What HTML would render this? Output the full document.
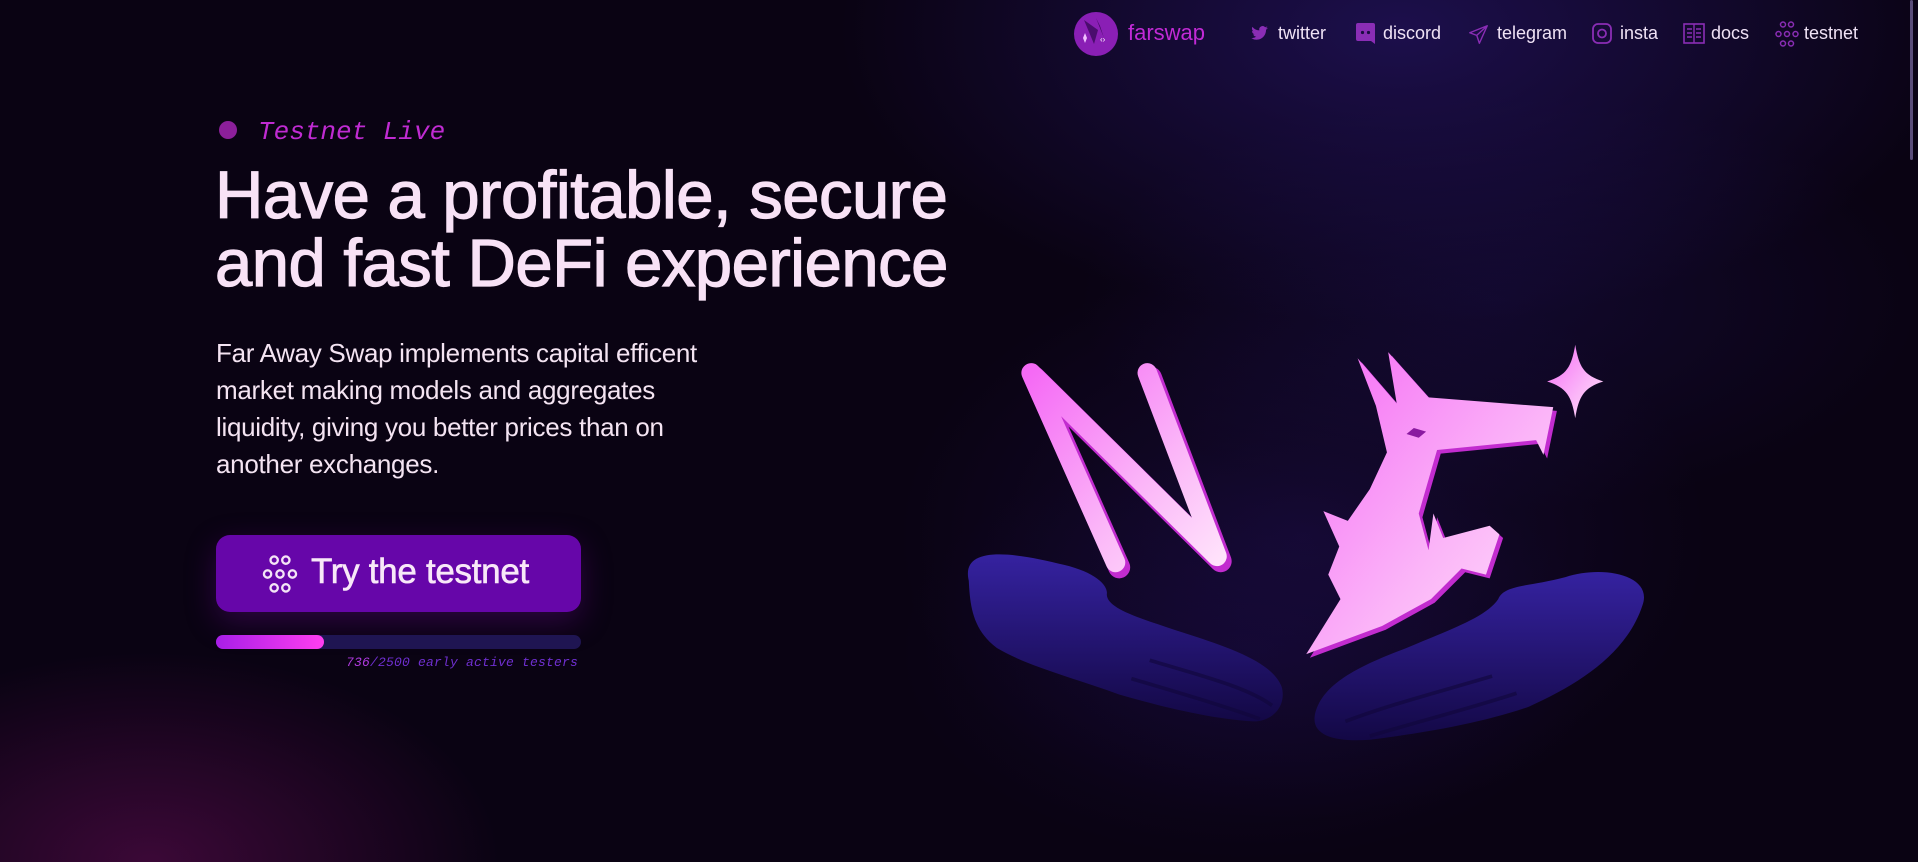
<!DOCTYPE html>
<html><head><meta charset="utf-8"><style>
*{margin:0;padding:0;box-sizing:border-box}
html,body{width:1918px;height:862px;overflow:hidden}
body{position:relative;font-family:"Liberation Sans",sans-serif;color:#f6e6f6;
background:
radial-gradient(ellipse 800px 420px at 1400px 30px, rgba(36,20,100,0.7), rgba(30,15,80,0) 70%),
radial-gradient(ellipse 600px 300px at 1500px 300px, rgba(25,14,70,0.5), rgba(20,10,60,0) 70%),
radial-gradient(ellipse 500px 300px at 150px 862px, rgba(80,10,70,0.7), rgba(60,8,55,0) 70%),
radial-gradient(ellipse 500px 300px at 1250px 650px, rgba(25,10,70,0.4), rgba(25,10,70,0) 70%),
#0a0313;}
.abs{position:absolute}
.nav a{position:absolute;top:23px;font-size:18px;color:#efe2f5;text-decoration:none;white-space:nowrap}
.ic{position:absolute;top:24px}
.mono{font-family:"Liberation Mono",monospace;font-style:italic}
</style></head><body>
<div class="abs" style="left:1910px;top:0;width:3px;height:160px;background:#5a4d7a;border-radius:2px"></div>

<svg class="abs" style="left:1074px;top:12px" width="44" height="44" viewBox="0 0 44 44">
<circle cx="22" cy="22" r="22" fill="#8a1fb5"/>
<path d="M10 8 L20 32 L24 18 Z" fill="#4a0d6e"/><path d="M22 6 L30 26 L26 14Z" fill="#3d0a5c"/>
<path d="M9 26 l2 -5 l2 5 l-2 5z" fill="#f0c0ff"/>
<text x="26" y="30" font-size="8" fill="#fff" font-family="Liberation Sans">‹›</text>
</svg>
<div class="nav">
<a style="left:1128px;top:20px;font-size:22px;color:#c22ad6">farswap</a>
<svg class="ic" style="left:1250px" width="19" height="18" viewBox="0 0 24 24"><path fill="#8a2db5" d="M23 5c-.8.4-1.7.6-2.6.7.9-.6 1.6-1.4 2-2.5-.9.5-1.9.9-2.9 1.1A4.5 4.5 0 0 0 11.8 8.5 12.8 12.8 0 0 1 2.5 3.8a4.5 4.5 0 0 0 1.4 6c-.7 0-1.4-.2-2-.6 0 2.2 1.6 4 3.6 4.5-.7.2-1.4.2-2 .1.6 1.8 2.2 3.1 4.200 3.1A9 9 0 0 1 1 18.8 12.8 12.8 0 0 0 7.9 21c8.3 0 12.8-6.9 12.8-12.8v-.6c.9-.6 1.6-1.4 2.3-2.3z"/></svg>
<a style="left:1278px">twitter</a>
<svg class="ic" style="left:1356px;top:23px" width="19" height="21" viewBox="0 0 19 21"><path fill="#8a2db5" d="M2 0h15a2 2 0 0 1 2 2v19l-4-3H2a2 2 0 0 1-2-2V2a2 2 0 0 1 2-2z"/><circle cx="6.5" cy="9.5" r="1.6" fill="#1a0c40"/><circle cx="12.5" cy="9.5" r="1.6" fill="#1a0c40"/></svg>
<a style="left:1383px">discord</a>
<svg class="ic" style="left:1468px" width="21" height="21" viewBox="0 0 24 24"><path fill="none" stroke="#8a2db5" stroke-width="1.6" stroke-linejoin="round" d="M22 2 2 10l8 3 3 9z M22 2 10 13"/></svg>
<a style="left:1497px">telegram</a>
<svg class="ic" style="left:1592px;top:23px" width="20" height="21" viewBox="0 0 20 21"><rect x="1" y="1" width="18" height="19" rx="5" fill="none" stroke="#8a2db5" stroke-width="1.8"/><circle cx="10" cy="10.5" r="4" fill="none" stroke="#8a2db5" stroke-width="1.8"/></svg>
<a style="left:1620px">insta</a>
<svg class="ic" style="left:1683px;top:23px" width="22" height="21" viewBox="0 0 22 21"><rect x="1" y="1" width="20" height="19" fill="none" stroke="#8a2db5" stroke-width="1.6"/><path d="M11 1v19M4 6h5M4 10h5M4 14h5M13 6h5M13 10h5M13 14h5" stroke="#8a2db5" stroke-width="1.4"/></svg>
<a style="left:1711px">docs</a>
<svg class="ic" style="left:1775px;top:21px" width="24" height="26" viewBox="0 0 24 26" fill="none" stroke="#8a2db5" stroke-width="1.5"><circle cx="8" cy="3.5" r="2.5"/><circle cx="16" cy="3.5" r="2.5"/><circle cx="3.5" cy="13" r="2.5"/><circle cx="12" cy="13" r="2.5"/><circle cx="20.5" cy="13" r="2.5"/><circle cx="8" cy="22.5" r="2.5"/><circle cx="16" cy="22.5" r="2.5"/></svg>
<a style="left:1804px">testnet</a>
</div>

<div class="abs" style="left:219px;top:121px;width:18px;height:18px;border-radius:50%;background:#8c1f9a"></div>
<div class="abs mono" style="left:258px;top:117px;font-size:26px;color:#c02bd2">Testnet Live</div>
<h1 class="abs" style="left:215px;top:162px;font-size:67px;line-height:68px;font-weight:normal;-webkit-text-stroke:1.2px #f8e2f6;color:#f8e2f6;letter-spacing:-0.5px;white-space:nowrap">Have a profitable, secure<br>and fast DeFi experience</h1>
<p class="abs" style="left:216px;top:335px;font-size:26px;line-height:37px;color:#f4e4f2;letter-spacing:-0.3px;white-space:nowrap">Far Away Swap implements capital efficent<br>market making models and aggregates<br>liquidity, giving you better prices than on<br>another exchanges.</p>

<div class="abs" style="left:216px;top:535px;width:365px;height:77px;border-radius:14px;background:#6606a9;box-shadow:0 10px 30px rgba(110,10,150,0.35)"></div>
<svg class="abs" style="left:262px;top:555px" width="36" height="38" viewBox="0 0 24 26" fill="none" stroke="#f4e4f6" stroke-width="1.6"><circle cx="8" cy="3.5" r="2.5"/><circle cx="16" cy="3.5" r="2.5"/><circle cx="3.5" cy="13" r="2.5"/><circle cx="12" cy="13" r="2.5"/><circle cx="20.5" cy="13" r="2.5"/><circle cx="8" cy="22.5" r="2.5"/><circle cx="16" cy="22.5" r="2.5"/></svg>
<div class="abs" style="left:311px;top:552px;font-size:35px;color:#f8e8f8;-webkit-text-stroke:0.6px #f8e8f8;letter-spacing:-0.3px">Try the testnet</div>

<div class="abs" style="left:216px;top:635px;width:365px;height:14px;border-radius:7px;background:#1f1552"></div>
<div class="abs" style="left:216px;top:635px;width:108px;height:14px;border-radius:7px;background:linear-gradient(90deg,#a81ee8,#ff3ef0)"></div>
<div class="abs mono" style="left:346px;top:655px;font-size:13px;color:#6f2fd0;letter-spacing:0.2px"><span style="color:#b03ae0">736</span>/2500 early active testers</div>

<svg class="abs" style="left:0;top:0" width="1918" height="862" viewBox="0 0 1568 705">
<defs>
<linearGradient id="hand" x1="0" y1="0" x2="0" y2="1"><stop offset="0" stop-color="#3522a0"/><stop offset="1" stop-color="#130845"/></linearGradient>
<linearGradient id="pink" x1="0" y1="0" x2="1" y2="1"><stop offset="0" stop-color="#f56af5"/><stop offset="0.6" stop-color="#fbb6f8"/><stop offset="1" stop-color="#ffe2fb"/></linearGradient>
<radialGradient id="glow" cx="0.5" cy="0.5" r="0.5"><stop offset="0" stop-color="#2a1670" stop-opacity="0.3"/><stop offset="1" stop-color="#2a1670" stop-opacity="0"/></radialGradient>
</defs>
<ellipse cx="1065" cy="440" rx="330" ry="230" fill="url(#glow)"/>
<path fill="url(#hand)" d="M792 475 C785 445 830 452 870 462 C895 468 905 478 905 485 C903 497 930 505 960 515 C1000 528 1040 540 1048 562 C1052 578 1040 590 1025 590 C990 588 950 578 915 568 C880 555 840 545 815 530 C795 515 793 495 792 475Z"/>
<path d="M940 540 C980 552 1020 562 1040 577 M925 555 C965 567 1000 577 1030 588" stroke="#10073a" stroke-width="3" fill="none" opacity="0.6"/>
<path fill="url(#hand)" d="M1343 495 C1352 470 1310 462 1280 472 C1250 480 1230 478 1225 490 C1215 505 1185 515 1150 530 C1110 545 1080 560 1075 585 C1072 603 1095 607 1120 605 C1160 600 1210 592 1250 578 C1290 560 1330 535 1343 495Z"/>
<path d="M1100 590 C1140 575 1180 565 1220 553 M1120 602 C1160 590 1200 580 1240 567" stroke="#10073a" stroke-width="3" fill="none" opacity="0.6"/>
<polyline points="912,460 843,305 995,455 938,305" fill="none" stroke="#c22ccf" stroke-width="18" stroke-linejoin="round" stroke-linecap="round" transform="translate(3,4)"/>
<polyline points="912,460 843,305 995,455 938,305" fill="none" stroke="url(#pink)" stroke-width="16" stroke-linejoin="round" stroke-linecap="round"/>
<path fill="#c22ccf" transform="translate(3,3)" d="M1110 293 L1142 330 L1135 288 L1168 325 L1270 333 L1262 372 L1256 360 L1175 368 L1160 420 L1168 450 L1172 420 L1180 440 L1218 430 L1226 437 L1215 470 L1195 465 L1170 490 L1130 512 L1068 535 L1096 490 L1086 470 L1095 447 L1082 418 L1102 426 L1120 400 L1134 370 L1125 332Z"/>
<path fill="url(#pink)" d="M1110 293 L1142 330 L1135 288 L1168 325 L1270 333 L1262 372 L1256 360 L1175 368 L1160 420 L1168 450 L1172 420 L1180 440 L1218 430 L1226 437 L1215 470 L1195 465 L1170 490 L1130 512 L1068 535 L1096 490 L1086 470 L1095 447 L1082 418 L1102 426 L1120 400 L1134 370 L1125 332Z"/>
<path d="M1150 355 l6 -5 l10 3 l-6 5z" fill="#8a1aa0"/>
<path fill="url(#pink)" d="M1288 282 C1291 300 1295 307 1311 312 C1295 317 1291 324 1288 342 C1285 324 1281 317 1265 312 C1281 307 1285 300 1288 282Z"/>
</svg>
</body></html>
